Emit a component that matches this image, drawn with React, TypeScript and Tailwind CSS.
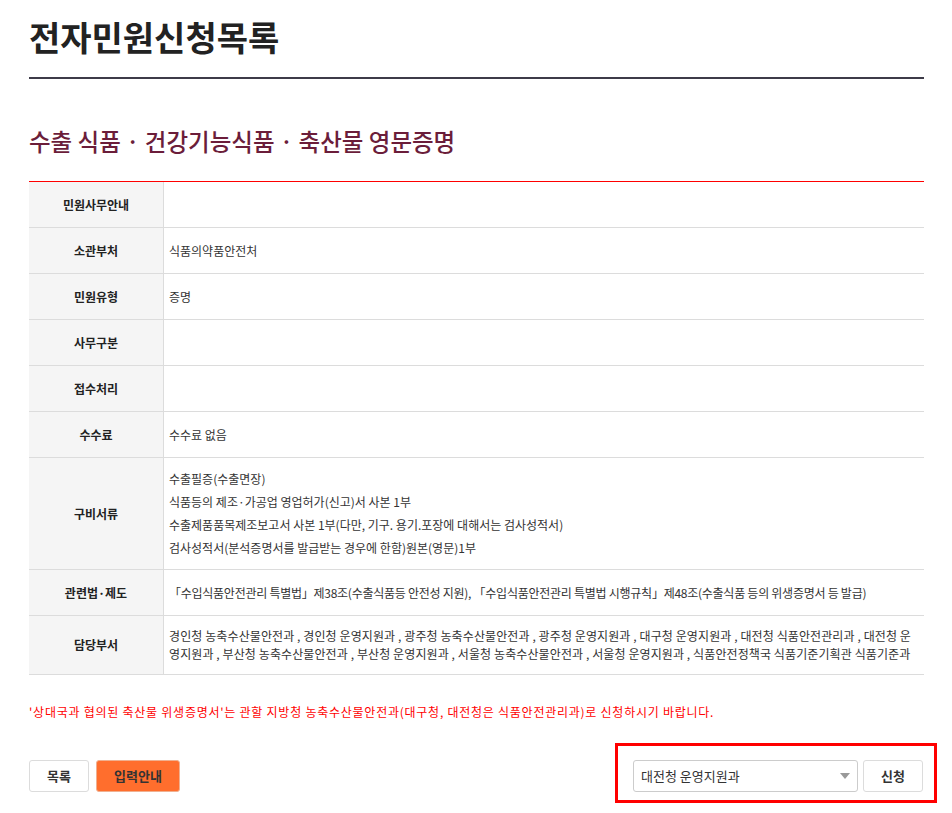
import React from "react";

const rows: { label: string; value: React.ReactNode }[] = [
  { label: "민원사무안내", value: "" },
  { label: "소관부처", value: "식품의약품안전처" },
  { label: "민원유형", value: "증명" },
  { label: "사무구분", value: "" },
  { label: "접수처리", value: "" },
  { label: "수수료", value: "수수료 없음" },
];

function Row({
  label,
  children,
  cellClass,
}: {
  label: string;
  children?: React.ReactNode;
  cellClass?: string;
}) {
  return (
    <div className="flex border-b border-[#dcdcdc]">
      <div className="w-[135px] shrink-0 bg-[#f5f5f5] border-r border-[#dcdcdc] flex items-center justify-center text-[12px] font-bold text-[#222]">
        {label}
      </div>
      <div
        className={
          "flex-1 pl-[5px] pr-[4px] text-[12px] text-[#333] " +
          (cellClass ?? "py-[11px] leading-[23px] min-h-[45px]")
        }
      >
        {children}
      </div>
    </div>
  );
}

export default function App() {
  return (
    <div
      className="w-[952px] min-h-[813px] bg-white pl-[29px] pr-[28px]"
      style={{ fontFamily: '"Noto Sans CJK KR", "Noto Sans", sans-serif' }}
    >
      <div className="pt-[17px] pb-[20px] border-b-2 border-[#3d3b48]">
        <h1 className="text-[34px] leading-[40px] font-bold text-[#222]">
          전자민원신청목록
        </h1>
      </div>

      <h2 className="mt-[47px] text-[23.5px] leading-[30px] font-medium text-[#6b1d3a]">
        수출 식품 · 건강기능식품 · 축산물 영문증명
      </h2>

      <div className="mt-[25px]">
        <div className="h-px bg-[#ff0000]" />
        {rows.map((r) => (
          <Row key={r.label} label={r.label}>
            {r.value}
          </Row>
        ))}
        <Row label="구비서류" cellClass="pt-[9px] pb-[10px] leading-[23px]">
          <div>수출필증(수출면장)</div>
          <div>식품등의 제조·가공업 영업허가(신고)서 사본 1부</div>
          <div>
            수출제품품목제조보고서 사본 1부(다만, 기구. 용기.포장에 대해서는
            검사성적서)
          </div>
          <div>검사성적서(분석증명서를 발급받는 경우에 한함)원본(영문)1부</div>
        </Row>
        <Row
          label="관련법·제도"
          cellClass="py-[11px] leading-[23px] min-h-[45px] tracking-[-0.26px]"
        >
          「수입식품안전관리 특별법」제38조(수출식품등 안전성 지원),
          「수입식품안전관리 특별법 시행규칙」제48조(수출식품 등의 위생증명서 등
          발급)
        </Row>
        <Row label="담당부서" cellClass="py-[11px] leading-[18px] tracking-[0.1px]">
          <div className="whitespace-nowrap">
            경인청 농축수산물안전과 , 경인청 운영지원과 , 광주청 농축수산물안전과
            , 광주청 운영지원과 , 대구청 운영지원과 , 대전청 식품안전관리과 , 대전청
            운
          </div>
          <div className="whitespace-nowrap">
            영지원과 , 부산청 농축수산물안전과 , 부산청 운영지원과 , 서울청
            농축수산물안전과 , 서울청 운영지원과 , 식품안전정책국 식품기준기획관
            식품기준과
          </div>
        </Row>
      </div>

      <p className="mt-[28px] text-[12px] leading-[18px] text-[#ff0000] tracking-[0.75px]">
        '상대국과 협의된 축산물 위생증명서'는 관할 지방청
        농축수산물안전과(대구청, 대전청은 식품안전관리과)로 신청하시기
        바랍니다.
      </p>

      <div className="mt-[39px] flex justify-between items-center">
        <div className="flex gap-[7px]">
          <button className="w-[60px] h-[32px] rounded-[3px] border border-[#dcdcdc] bg-white text-[13px] font-bold text-[#333]">
            목록
          </button>
          <button className="w-[84px] h-[32px] rounded-[3px] border border-[#f0b090] bg-[#ff6e2d] text-[13px] font-bold text-[#333]">
            입력안내
          </button>
        </div>
        <div className="relative flex gap-[5px] mr-[1px]">
          <div className="absolute top-[-17px] left-[-18px] right-[-14px] bottom-[-11px] border-[3px] border-[#ff0000] pointer-events-none" />
          <div className="w-[225px] h-[32px] rounded-[3px] border border-[#cccccc] bg-white flex items-center justify-between pl-[7px] pr-[7px]">
            <span className="text-[13px] text-[#333]">대전청 운영지원과</span>
            <svg width="10" height="6" viewBox="0 0 10 6">
              <path d="M0 0 L10 0 L5 6 Z" fill="#999" />
            </svg>
          </div>
          <button className="w-[60px] h-[32px] rounded-[3px] border border-[#dcdcdc] bg-white text-[13px] font-bold text-[#333]">
            신청
          </button>
        </div>
      </div>
    </div>
  );
}
